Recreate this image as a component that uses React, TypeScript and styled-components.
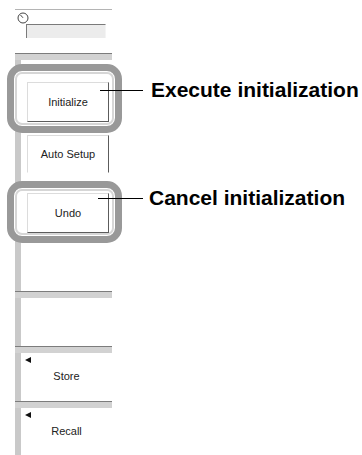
import styled, { createGlobalStyle } from 'styled-components';

const GlobalStyle = createGlobalStyle`
    html, body {
        margin: 0;
        padding: 0;
        background: #ffffff;
    }
`;

const App = () => {
    return (
        <>
            <GlobalStyle />
            <Figure>
                <Panel>
                    {/* 다이얼 + 입력칸 */}
                    <TopSection>
                        <Dial width="12" height="12" viewBox="0 0 12 12">
                            <circle cx="6" cy="6" r="5" fill="none" stroke="#444" strokeWidth="1" />
                            <line x1="3.5" y1="3" x2="6" y2="5.8" stroke="#444" strokeWidth="1" />
                        </Dial>
                        <Field />
                    </TopSection>
                    <Separator />

                    <Section $height={231}>
                        <Strip />
                        <ButtonColumn>
                            <SoftKey $height={40}>Initialize</SoftKey>
                            <SoftKey $height={38} $top={13} $open>
                                Auto Setup
                            </SoftKey>
                            <SoftKey $height={40} $top={20}>
                                Undo
                            </SoftKey>
                        </ButtonColumn>
                    </Section>
                    <Separator />

                    <Section $height={48}>
                        <Strip />
                        <MenuBody />
                    </Section>
                    <Separator />

                    <Section $height={48}>
                        <Strip />
                        <MenuBody>
                            <Arrow />
                            <MenuLabel>Store</MenuLabel>
                        </MenuBody>
                    </Section>
                    <Separator />

                    <Section $height={47}>
                        <Strip />
                        <MenuBody>
                            <Arrow />
                            <MenuLabel>Recall</MenuLabel>
                        </MenuBody>
                    </Section>
                </Panel>

                {/* 강조 테두리 */}
                <Highlight $top={64} $height={69} />
                <Highlight $top={181} $height={62} />

                {/* 설명 */}
                <Callout $left={100} $top={78}>
                    <Leader $width={43} $gap={8} />
                    Execute initialization
                </Callout>
                <Callout $left={98} $top={186}>
                    <Leader $width={45} $gap={6} />
                    Cancel initialization
                </Callout>
            </Figure>
        </>
    );
};

// 전체 그림
const Figure = styled.div`
    position: relative;
    width: 362px;
    height: 455px;
    overflow: hidden;
    background: #ffffff;
    font-family: 'Liberation Sans', Arial, sans-serif;
`;

// 왼쪽 메뉴 패널
const Panel = styled.div`
    margin-left: 15px;
    padding-top: 9px;
    width: 97px;
    display: flex;
    flex-direction: column;
`;

const TopSection = styled.div`
    position: relative;
    height: 43px;
    border-top: 1px solid #b4b4b4;
    display: flex;
    flex-direction: column;
`;

const Dial = styled.svg`
    display: block;
    margin: 2px 0 0 2px;
`;

const Field = styled.div`
    margin: 0 0 0 11px;
    width: 80px;
    height: 14px;
    box-sizing: border-box;
    background: #ececec;
    border-top: 1px solid #7a7a7a;
    border-left: 1px solid #7a7a7a;
    border-right: 1px solid #f4f4f4;
`;

// 구분선
const Separator = styled.div`
    height: 6px;
    background: #d2d2d2;
    border-top: 1px solid #7c7c7c;
`;

const Section = styled.div<{ $height: number }>`
    height: ${(p) => p.$height}px;
    display: flex;
`;

const Strip = styled.div`
    width: 6px;
    flex-shrink: 0;
    background: #c9c9c9;
`;

const ButtonColumn = styled.div`
    flex: 1;
    display: flex;
    flex-direction: column;
    padding: 22px 0 0 6px;
`;

const SoftKey = styled.div<{ $height: number; $top?: number; $open?: boolean }>`
    position: relative;
    z-index: 2;
    box-sizing: border-box;
    width: 82px;
    height: ${(p) => p.$height}px;
    margin-top: ${(p) => p.$top ?? 0}px;
    display: flex;
    align-items: center;
    justify-content: center;
    background: #ffffff;
    border-top: 1px solid #dcdcdc;
    border-left: 1px solid #dcdcdc;
    border-right: 1px solid #5c5c5c;
    border-bottom: 1px solid ${(p) => (p.$open ? '#ffffff' : '#5c5c5c')};
    font-size: 11px;
    color: #222222;
`;

const MenuBody = styled.div`
    flex: 1;
    display: flex;
    flex-direction: column;
    padding: 4px 0 0 4px;
`;

const Arrow = styled.div`
    width: 0;
    height: 0;
    border-top: 3.5px solid transparent;
    border-bottom: 3.5px solid transparent;
    border-right: 6px solid #111111;
`;

const MenuLabel = styled.div`
    margin: 7px 0 0 -4px;
    text-align: center;
    font-size: 11px;
    color: #222222;
`;

// 회색 둥근 강조
const Highlight = styled.div<{ $top: number; $height: number }>`
    position: absolute;
    z-index: 1;
    left: 7px;
    top: ${(p) => p.$top}px;
    width: 115px;
    height: ${(p) => p.$height}px;
    box-sizing: border-box;
    border: 7px solid #999999;
    border-radius: 15px;
    background: #ffffff;
    box-shadow: inset 0 0 0 1px #ffffff, inset 0 0 0 3px #d6d6d6;
`;

const Callout = styled.div<{ $left: number; $top: number }>`
    position: absolute;
    z-index: 3;
    left: ${(p) => p.$left}px;
    top: ${(p) => p.$top}px;
    height: 24px;
    display: flex;
    align-items: center;
    white-space: nowrap;
    font-size: 21px;
    font-weight: bold;
    color: #000000;
`;

const Leader = styled.div<{ $width: number; $gap: number }>`
    width: ${(p) => p.$width}px;
    height: 1px;
    margin-right: ${(p) => p.$gap}px;
    background: #000000;
`;

export default App;
